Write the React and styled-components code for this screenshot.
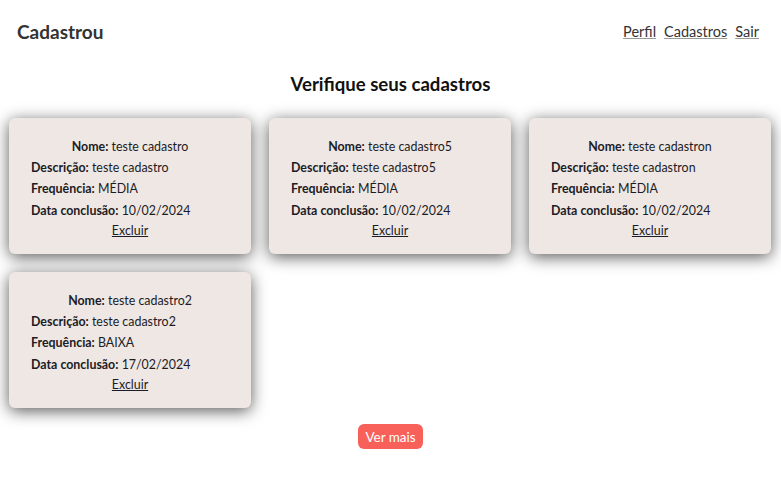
import React from "react";
import styled, { createGlobalStyle } from "styled-components";

const GlobalStyle = createGlobalStyle`
  * { box-sizing: border-box; }
  body {
    margin: 0;
    background: #ffffff;
    font-family: Lato, "Open Sans", sans-serif;
    color: #1c1c24;
  }
`;

const Header = styled.header`
  display: flex;
  align-items: center;
  justify-content: space-between;
  height: 62px;
  padding: 0 22px 0 17px;
`;

const Brand = styled.h1`
  margin: 0;
  font-size: 19px;
  font-weight: 700;
  color: #333333;
`;

const Nav = styled.nav`
  display: flex;
  gap: 8px;
`;

const NavLink = styled.a`
  font-size: 14.5px;
  color: #333333;
  text-decoration: underline;
  text-decoration-color: #999;
  cursor: pointer;
`;

const Title = styled.h2`
  margin: 10px 0 0;
  height: 25px;
  line-height: 25px;
  text-align: center;
  font-size: 18.6px;
  font-weight: 700;
  color: #111111;
`;

const Grid = styled.section`
  display: flex;
  flex-wrap: wrap;
  gap: 18px;
  padding: 21px 9px 0;
`;

const Card = styled.article`
  width: 242px;
  height: 136px;
  padding: 21px 22px 0;
  background: #efe7e4;
  border-radius: 6px;
  box-shadow: 0 3px 16px rgba(0, 0, 0, 0.65);
  font-size: 12.4px;
`;

const Line = styled.p`
  margin: 0 0 ${(p) => p.$gap || 5}px;
  line-height: 16px;
  text-align: ${(p) => (p.$center ? "center" : "left")};
`;

const Label = styled.strong`
  font-weight: 700;
`;

const Remove = styled.a`
  display: block;
  text-align: center;
  text-decoration: underline;
  color: #1c1c24;
  line-height: 16px;
  cursor: pointer;
`;

const Footer = styled.div`
  display: flex;
  justify-content: center;
  padding-top: 16px;
`;

const MoreButton = styled.button`
  height: 25px;
  padding: 0 7px;
  border: none;
  border-radius: 6px;
  background: #f8615a;
  color: #ffffff;
  font-family: Lato, sans-serif;
  font-size: 13.5px;
  cursor: pointer;
`;

const items = [
  { nome: "teste cadastro", desc: "teste cadastro", freq: "MÉDIA", data: "10/02/2024" },
  { nome: "teste cadastro5", desc: "teste cadastro5", freq: "MÉDIA", data: "10/02/2024" },
  { nome: "teste cadastron", desc: "teste cadastron", freq: "MÉDIA", data: "10/02/2024" },
  { nome: "teste cadastro2", desc: "teste cadastro2", freq: "BAIXA", data: "17/02/2024" },
];

export default function App() {
  return (
    <>
      <GlobalStyle />
      <Header>
        <Brand>Cadastrou</Brand>
        <Nav>
          <NavLink>Perfil</NavLink>
          <NavLink>Cadastros</NavLink>
          <NavLink>Sair</NavLink>
        </Nav>
      </Header>
      <Title>Verifique seus cadastros</Title>
      <Grid>
        {items.map((it, i) => (
          <Card key={i}>
            <Line $center $gap={5}>
              <Label>Nome:</Label> {it.nome}
            </Line>
            <Line>
              <Label>Descrição:</Label> {it.desc}
            </Line>
            <Line $gap={6}>
              <Label>Frequência:</Label> {it.freq}
            </Line>
            <Line $gap={4}>
              <Label>Data conclusão:</Label> {it.data}
            </Line>
            <Remove>Excluir</Remove>
          </Card>
        ))}
      </Grid>
      <Footer>
        <MoreButton>Ver mais</MoreButton>
      </Footer>
    </>
  );
}
